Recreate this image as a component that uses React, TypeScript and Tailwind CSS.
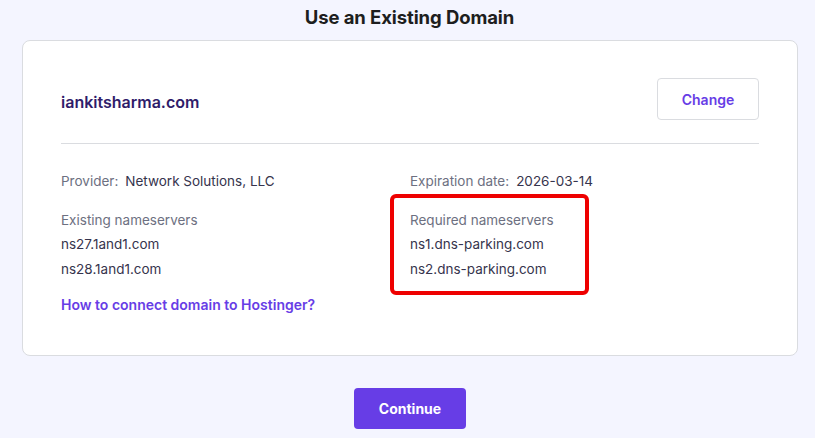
import React from 'react';

const font = { fontFamily: 'Inter, "Noto Sans", sans-serif' };

export default function App() {
  return (
    <div className="min-h-[438px] w-full bg-[#f4f5ff] text-[#36344d]" style={font}>
      <h1 className="pt-[3px] pl-[4px] text-center text-[18.5px] font-bold leading-[28px] text-[#1d1e20] tracking-[-0.1px]">
        Use an Existing Domain
      </h1>

      <div className="ml-[22px] mr-[17px] mt-[9px] rounded-lg border border-[#dadce0] bg-white px-[38px] pt-[37px] pb-[40px]">
        <div className="flex items-center justify-between">
          <span className="mt-[6px] text-[16px] font-semibold text-[#2f1c6a]">iankitsharma.com</span>
          <button className="h-[42px] w-[102px] rounded border border-[#dadce0] text-[14px] font-semibold text-[#673de6]">
            Change
          </button>
        </div>

        <div className="mt-[23px] h-px bg-[#dadce0]" />

        <div className="mt-[27px] grid grid-cols-[349px_1fr] text-[13.5px] leading-[20px]">
          <div>
            <div>
              <span className="text-[#6d7081]">Provider:</span>
              <span className="ml-[7px]">Network Solutions, LLC</span>
            </div>
            <div className="mt-[19px] text-[#6d7081]">Existing nameservers</div>
            <div className="mt-[4px]">ns27.1and1.com</div>
            <div className="mt-[5px]">ns28.1and1.com</div>
          </div>
          <div>
            <div>
              <span className="text-[#6d7081]">Expiration date:</span>
              <span className="ml-[7px]">2026-03-14</span>
            </div>
            <div className="relative mt-[19px]">
              <div className="absolute -left-[20px] -top-[16px] h-[101px] w-[199px] rounded-md border-4 border-[#ee0000]" />
              <div className="text-[#6d7081]">Required nameservers</div>
              <div className="mt-[4px]">ns1.dns-parking.com</div>
              <div className="mt-[5px]">ns2.dns-parking.com</div>
            </div>
          </div>
        </div>

        <a href="#" className="mt-[16px] block text-[14px] font-semibold leading-[20px] text-[#673de6]">
          How to connect domain to Hostinger?
        </a>
      </div>

      <div className="mt-[32px] flex justify-center pl-[5px]">
        <button className="h-[41px] w-[112px] rounded bg-[#673de6] text-[14px] font-bold text-white">
          Continue
        </button>
      </div>
    </div>
  );
}
